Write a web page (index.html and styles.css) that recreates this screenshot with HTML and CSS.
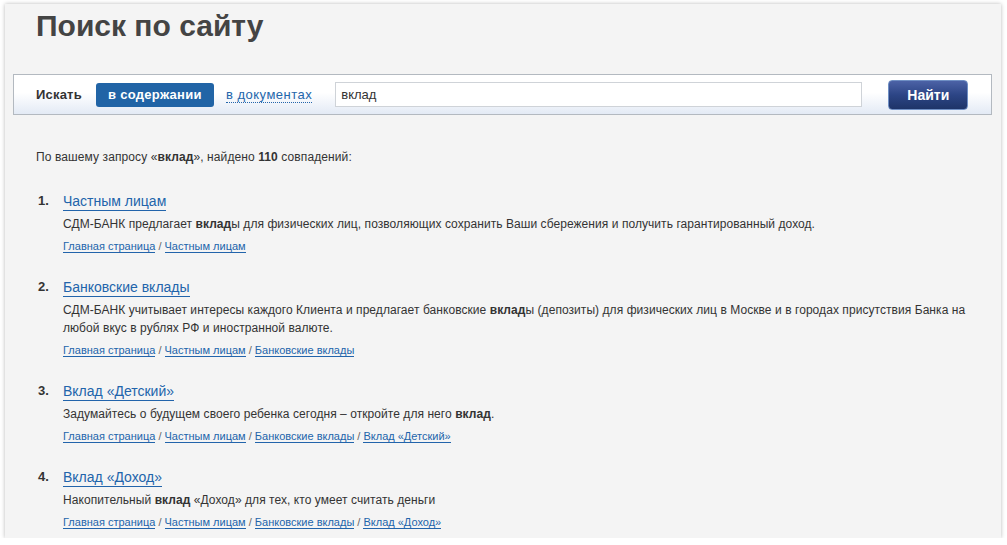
FILE: index.html
```html
<!DOCTYPE html>
<html lang="ru">
<head>
<meta charset="utf-8">
<title>Поиск по сайту</title>
<link rel="stylesheet" href="styles.css">
</head>
<body>
<div class="page">
  <h1 class="title">Поиск по сайту</h1>
  <form class="searchbar">
    <span class="search-label">Искать</span>
    <span class="tab tab-active">в содержании</span>
    <a class="tab-link" href="#">в документах</a>
    <input class="search-input" type="text" value="вклад">
    <button class="search-btn" type="button">Найти</button>
  </form>
  <p class="summary">По вашему запросу «<b>вклад</b>», найдено <b>110</b> совпадений:</p>
  <ol class="results">
    <li class="result">
      <span class="num">1.</span>
      <div class="body">
        <a class="r-title" href="#">Частным лицам</a>
        <p class="desc">СДМ-БАНК предлагает <b>вклад</b>ы для физических лиц, позволяющих сохранить Ваши сбережения и получить гарантированный доход.</p>
        <p class="crumbs"><a href="#">Главная страница</a> / <a href="#">Частным лицам</a></p>
      </div>
    </li>
    <li class="result">
      <span class="num">2.</span>
      <div class="body">
        <a class="r-title" href="#">Банковские вклады</a>
        <p class="desc">СДМ-БАНК учитывает интересы каждого Клиента и предлагает банковские <b>вклад</b>ы (депозиты) для физических лиц в Москве и в городах присутствия Банка на любой вкус в рублях РФ и иностранной валюте.</p>
        <p class="crumbs"><a href="#">Главная страница</a> / <a href="#">Частным лицам</a> / <a href="#">Банковские вклады</a></p>
      </div>
    </li>
    <li class="result">
      <span class="num">3.</span>
      <div class="body">
        <a class="r-title" href="#">Вклад «Детский»</a>
        <p class="desc">Задумайтесь о будущем своего ребенка сегодня – откройте для него <b>вклад</b>.</p>
        <p class="crumbs"><a href="#">Главная страница</a> / <a href="#">Частным лицам</a> / <a href="#">Банковские вклады</a> / <a href="#">Вклад «Детский»</a></p>
      </div>
    </li>
    <li class="result">
      <span class="num">4.</span>
      <div class="body">
        <a class="r-title" href="#">Вклад «Доход»</a>
        <p class="desc">Накопительный <b>вклад</b> «Доход» для тех, кто умеет считать деньги</p>
        <p class="crumbs"><a href="#">Главная страница</a> / <a href="#">Частным лицам</a> / <a href="#">Банковские вклады</a> / <a href="#">Вклад «Доход»</a></p>
      </div>
    </li>
  </ol>
</div>
</body>
</html>
```
FILE: styles.css
```css
html, body {
  margin: 0;
  padding: 0;
  background: #ffffff;
}
body {
  font-family: "Liberation Sans", Arial, sans-serif;
  color: #333333;
  overflow: hidden;
}
.page {
  margin: 4px 6px 0 5px;
  height: 534px;
  box-sizing: border-box;
  background: #f4f4f4;
  box-shadow: 0 0 4px rgba(0, 0, 0, 0.28);
  padding: 4px 9px 0 8px;
}
.title {
  margin: 0 0 30px 23px;
  font-size: 30px;
  line-height: 36px;
  font-weight: bold;
  color: #444444;
}
.searchbar {
  display: flex;
  align-items: center;
  height: 41px;
  box-sizing: border-box;
  border: 1px solid #b3b9c0;
  background: linear-gradient(#ffffff 0%, #ffffff 45%, #e3eaf5 100%);
  padding: 0 24px 0 22px;
  margin: 0;
}
.searchbar > * {
  flex: none;
  white-space: nowrap;
}
.search-label {
  font-size: 13px;
  font-weight: bold;
  color: #333333;
  margin-right: 14px;
  letter-spacing: 0.2px;
}
.tab-active {
  display: inline-block;
  height: 24px;
  line-height: 24px;
  width: 118px;
  text-align: center;
  background: #2164a6;
  color: #ffffff;
  font-size: 13px;
  font-weight: bold;
  letter-spacing: 0.3px;
  border-radius: 3px;
  margin-right: 12px;
}
.tab-link {
  font-size: 13px;
  letter-spacing: 0.5px;
  color: #2466ab;
  text-decoration: none;
  border-bottom: 1px dotted #2466ab;
  line-height: 15px;
  margin-right: 23px;
}
.search-input {
  width: 527px;
  height: 25px;
  box-sizing: border-box;
  border: 1px solid #cfd3d8;
  background: #ffffff;
  font-family: "Liberation Sans", Arial, sans-serif;
  font-size: 13px;
  color: #333333;
  padding: 0 5px;
  outline: none;
  margin: 0 26px 0 0;
}
.search-btn {
  width: 80px;
  height: 30px;
  box-sizing: border-box;
  border: 1px solid #6f8fc4;
  border-radius: 4px;
  background: linear-gradient(#4c62a6 0%, #2c4585 50%, #1e3468 100%);
  color: #ffffff;
  font-family: "Liberation Sans", Arial, sans-serif;
  font-size: 14px;
  font-weight: bold;
  padding: 0;
  margin-left: auto;
}
.summary {
  margin: 35px 0 0 23px;
  font-size: 12px;
  line-height: 15px;
  letter-spacing: 0.1px;
}
.results {
  list-style: none;
  margin: 27px 0 0 0;
  padding: 0 0 0 25px;
}
.result {
  display: flex;
  margin-bottom: 24px;
}
.num {
  width: 25px;
  flex: none;
  font-size: 13px;
  font-weight: bold;
  line-height: 18px;
  color: #333333;
}
.body {
  flex: 1;
}
.r-title {
  font-size: 14px;
  line-height: 17px;
  color: #2264ab;
  text-decoration: none;
  border-bottom: 1px solid #2264ab;
  display: inline-block;
}
.desc {
  margin: 4px 0 0 0;
  font-size: 12px;
  line-height: 18px;
  letter-spacing: 0.06px;
  color: #333333;
  padding-right: 12px;
}
.crumbs {
  margin: 6px 0 0 0;
  font-size: 11px;
  line-height: 15px;
  color: #666666;
}
.crumbs a {
  color: #2264ab;
  text-decoration: none;
  border-bottom: 1px solid #2264ab;
}
```
